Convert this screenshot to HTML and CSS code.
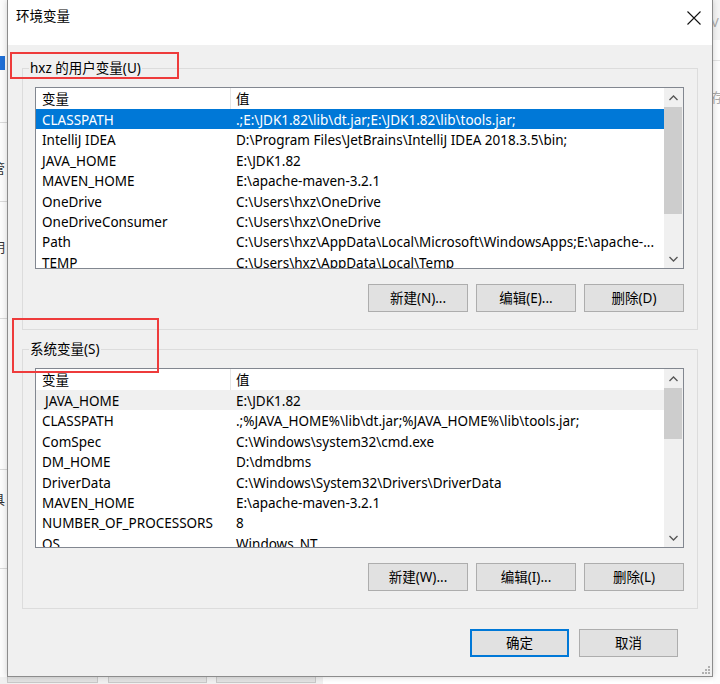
FILE: index.html
```html
<!DOCTYPE html>
<html lang="zh-CN">
<head>
<meta charset="utf-8">
<title>环境变量</title>
<link rel="stylesheet" href="styles.css">
</head>
<body>
<div class="desk">
  <div class="bg-left">
    <div class="bl-blue"></div>
    <div class="bl-line l1"></div>
    <div class="bl-txt t1">管</div>
    <div class="bl-line l2"></div>
    <div class="bl-txt t2">明</div>
    <div class="bl-line l3"></div>
    <div class="bl-line l4"></div>
    <div class="bl-txt t3">具</div>
    <div class="bl-line l5"></div>
  </div>

  <div class="dialog">
    <div class="titlebar">
      <span class="title">环境变量</span>
      <svg class="close" width="14" height="14" viewBox="0 0 14 14"><path d="M0.5 0.5 L13.5 13.5 M13.5 0.5 L0.5 13.5" stroke="#111" stroke-width="1.1" fill="none"/></svg>
    </div>

    <div class="content">
      <div class="group">
        <span class="group-title">hxz 的用户变量(U)</span>
        <div class="list">
          <div class="list-body">
            <div class="list-head"><span class="c1">变量</span><span class="c2">值</span></div>
            <div class="row sel"><span class="c1">CLASSPATH</span><span class="c2">.;E:\JDK1.82\lib\dt.jar;E:\JDK1.82\lib\tools.jar;</span></div>
            <div class="row"><span class="c1">IntelliJ IDEA</span><span class="c2">D:\Program Files\JetBrains\IntelliJ IDEA 2018.3.5\bin;</span></div>
            <div class="row"><span class="c1">JAVA_HOME</span><span class="c2">E:\JDK1.82</span></div>
            <div class="row"><span class="c1">MAVEN_HOME</span><span class="c2">E:\apache-maven-3.2.1</span></div>
            <div class="row"><span class="c1">OneDrive</span><span class="c2">C:\Users\hxz\OneDrive</span></div>
            <div class="row"><span class="c1">OneDriveConsumer</span><span class="c2">C:\Users\hxz\OneDrive</span></div>
            <div class="row"><span class="c1">Path</span><span class="c2">C:\Users\hxz\AppData\Local\Microsoft\WindowsApps;E:\apache-...</span></div>
            <div class="row"><span class="c1">TEMP</span><span class="c2">C:\Users\hxz\AppData\Local\Temp</span></div>
          </div>
          <div class="scrollbar">
            <div class="arrow"><svg width="9" height="6" viewBox="0 0 9 6"><path d="M0.5 5 L4.5 1 L8.5 5" stroke="#555" stroke-width="1.3" fill="none"/></svg></div>
            <div class="track"><div class="thumb thumb-user"></div></div>
            <div class="arrow"><svg width="9" height="6" viewBox="0 0 9 6"><path d="M0.5 1 L4.5 5 L8.5 1" stroke="#555" stroke-width="1.3" fill="none"/></svg></div>
          </div>
        </div>
        <div class="btn-row">
          <button class="btn">新建(N)...</button>
          <button class="btn">编辑(E)...</button>
          <button class="btn">删除(D)</button>
        </div>
      </div>

      <div class="group group-sys">
        <span class="group-title">系统变量(S)</span>
        <div class="list">
          <div class="list-body">
            <div class="list-head"><span class="c1">变量</span><span class="c2">值</span></div>
            <div class="row hover"><span class="c1 indent">JAVA_HOME</span><span class="c2">E:\JDK1.82</span></div>
            <div class="row"><span class="c1">CLASSPATH</span><span class="c2">.;%JAVA_HOME%\lib\dt.jar;%JAVA_HOME%\lib\tools.jar;</span></div>
            <div class="row"><span class="c1">ComSpec</span><span class="c2">C:\Windows\system32\cmd.exe</span></div>
            <div class="row"><span class="c1">DM_HOME</span><span class="c2">D:\dmdbms</span></div>
            <div class="row"><span class="c1">DriverData</span><span class="c2">C:\Windows\System32\Drivers\DriverData</span></div>
            <div class="row"><span class="c1">MAVEN_HOME</span><span class="c2">E:\apache-maven-3.2.1</span></div>
            <div class="row"><span class="c1">NUMBER_OF_PROCESSORS</span><span class="c2">8</span></div>
            <div class="row"><span class="c1">OS</span><span class="c2">Windows_NT</span></div>
          </div>
          <div class="scrollbar">
            <div class="arrow"><svg width="9" height="6" viewBox="0 0 9 6"><path d="M0.5 5 L4.5 1 L8.5 5" stroke="#555" stroke-width="1.3" fill="none"/></svg></div>
            <div class="track"><div class="thumb thumb-sys"></div></div>
            <div class="arrow"><svg width="9" height="6" viewBox="0 0 9 6"><path d="M0.5 1 L4.5 5 L8.5 1" stroke="#555" stroke-width="1.3" fill="none"/></svg></div>
          </div>
        </div>
        <div class="btn-row">
          <button class="btn">新建(W)...</button>
          <button class="btn">编辑(I)...</button>
          <button class="btn">删除(L)</button>
        </div>
      </div>

      <div class="footer">
        <button class="btn btn-default">确定</button>
        <button class="btn">取消</button>
      </div>
    </div>

    <svg class="grip" width="8" height="8" viewBox="0 0 8 8" fill="#b0b0b0">
      <rect x="6" y="0" width="2" height="2"/><rect x="3" y="3" width="2" height="2"/><rect x="6" y="3" width="2" height="2"/>
      <rect x="0" y="6" width="2" height="2"/><rect x="3" y="6" width="2" height="2"/><rect x="6" y="6" width="2" height="2"/>
    </svg>

    <div class="mark mark-user"></div>
    <div class="mark mark-sys"></div>
  </div>

  <div class="bg-right">
    <div class="br-top">V</div>
    <div class="br-line"></div>
    <div class="br-txt">存</div>
  </div>

  <div class="bg-bottom">
    <div class="bb-btn b1"></div>
    <div class="bb-btn b2"></div>
    <div class="bb-btn b3"></div>
    <div class="bb-white"></div>
  </div>
</div>
</body>
</html>
```

FILE: styles.css
```css
* { box-sizing: border-box; }

html, body {
  margin: 0;
  padding: 0;
}

body {
  width: 720px;
  height: 684px;
  overflow: hidden;
  background: #f3f3f3;
  font-family: "Noto Sans", "Noto Sans CJK SC", sans-serif;
  font-size: 13.5px;
  color: #000;
}

.desk {
  display: grid;
  grid-template-columns: 7px 706px 7px;
  grid-template-rows: 677px 7px;
  width: 720px;
  height: 684px;
}

/* ---------- backdrop ---------- */
.bg-left {
  grid-column: 1;
  grid-row: 1;
  background: #fbfbfb;
  display: flex;
  flex-direction: column;
  overflow: hidden;
  font-size: 13px;
  color: #333;
}
.bl-blue { margin-top: 56px; height: 14px; width: 5px; background: #1f6fd6; }
.bl-line { height: 1px; background: #d9d9d9; }
.bl-line.l1 { margin-top: 52px; }
.bl-txt { width: 20px; margin-left: -8px; line-height: 18px; }
.bl-txt.t1 { margin-top: 36px; }
.bl-line.l2 { margin-top: 24px; }
.bl-txt.t2 { margin-top: 36px; }
.bl-line.l3 { margin-top: 62px; }
.bl-line.l4 { margin-top: 150px; }
.bl-txt.t3 { margin-top: 20px; }
.bl-line.l5 { margin-top: 60px; }

.bg-right {
  grid-column: 3;
  grid-row: 1 / span 2;
  background: #fdfdfd;
  display: flex;
  flex-direction: column;
  overflow: hidden;
  color: #aaa;
  font-size: 13px;
}
.br-top { height: 40px; background: #f4f4f4; padding-top: 14px; line-height: 16px; margin-left: -2px; }
.br-line { height: 1px; background: #e3e3e3; margin-top: 20px; }
.br-txt { margin-top: 28px; margin-left: -2px; line-height: 16px; }

.bg-bottom {
  grid-column: 1 / span 2;
  grid-row: 2;
  display: flex;
  background: #f0f0f0;
  padding-left: 7px;
}
.bb-btn { height: 6px; background: #e3e3e3; border: 1px solid #c8c8c8; border-top: none; }
.bb-btn.b1 { width: 91px; }
.bb-btn.b2 { width: 99px; margin-left: 10px; }
.bb-btn.b3 { width: 100px; margin-left: 9px; }
.bb-white { flex: 1; background: #fff; margin-left: 7px; }

/* ---------- dialog ---------- */
.dialog {
  grid-column: 2;
  grid-row: 1;
  position: relative;
  background: #f0f0f0;
  border: 1px solid #8c8c8c;
  border-top: none;
  box-shadow: 0 0 6px rgba(0, 0, 0, 0.18);
  display: flex;
  flex-direction: column;
}

.titlebar {
  height: 45px;
  background: #fff;
  display: flex;
  justify-content: space-between;
  align-items: flex-start;
  padding: 7px 11px 0 8px;
}
.title { line-height: 18px; }
.close { margin-top: 4px; }

.content {
  display: flex;
  flex-direction: column;
  padding: 0 14px;
}

.group {
  display: flex;
  flex-direction: column;
  border: 1px solid #dcdcdc;
  margin-top: 23px;
  padding: 0 13px 17px 12px;
}
.group-sys { margin-top: 19px; }

.group-title {
  align-self: flex-start;
  margin-top: -10px;
  margin-left: -6px;
  padding: 0 1px;
  line-height: 18px;
  background: #f0f0f0;
}

.list {
  margin-top: 10px;
  height: 182px;
  border: 1px solid #828790;
  background: #fff;
  display: flex;
}
.group-sys .list { height: 180px; }

.list-body {
  flex: 1;
  min-width: 0;
  overflow: hidden;
}

.list-head, .row {
  display: grid;
  grid-template-columns: 194px 1fr;
  white-space: nowrap;
}
.list-head { height: 21px; }
.list-head .c1, .list-head .c2 { padding-top: 2px; line-height: 19px; }
.list-head .c2 { border-left: 1px solid #e5e5e5; padding-left: 5px; }
.row { height: 20.4px; padding-top: 3px; line-height: 17.4px; }

.c1, .c2 { overflow: hidden; }
.c1 { padding-left: 6px; }
.c2 { padding-left: 6px; }
.c1.indent { padding-left: 9px; }

.row.sel { background: #0078d7; color: #fff; }
.row.hover { background: #f0f0f0; }

.scrollbar {
  width: 19px;
  background: #f0f0f0;
  display: flex;
  flex-direction: column;
}
.arrow {
  height: 19px;
  display: flex;
  align-items: center;
  justify-content: center;
}
.track { flex: 1; }
.thumb { background: #cdcdcd; margin: 0 1px 0 0; }
.thumb-user { height: 107px; }
.thumb-sys { height: 51px; }

.btn-row {
  display: flex;
  justify-content: flex-end;
  gap: 8px;
  margin-top: 15px;
}

.btn {
  width: 100px;
  height: 28px;
  padding: 0;
  background: #e1e1e1;
  border: 1px solid #adadad;
  font: inherit;
  color: #000;
  line-height: 26px;
}

.footer {
  display: flex;
  justify-content: flex-end;
  gap: 10px;
  margin-top: 20px;
  padding-right: 20px;
}
.footer .btn { width: 99px; }
.btn-default { border-color: #0078d7; box-shadow: inset 0 0 0 1px #0078d7; }

.grip {
  position: absolute;
  right: 2px;
  bottom: 2px;
}

/* red annotation boxes drawn over the screenshot */
.mark {
  position: absolute;
  border: 2px solid #ee3b3b;
}
.mark-user { left: 2px; top: 52px; width: 169px; height: 27px; }
.mark-sys { left: 4px; top: 318px; width: 147px; height: 55px; }
```
